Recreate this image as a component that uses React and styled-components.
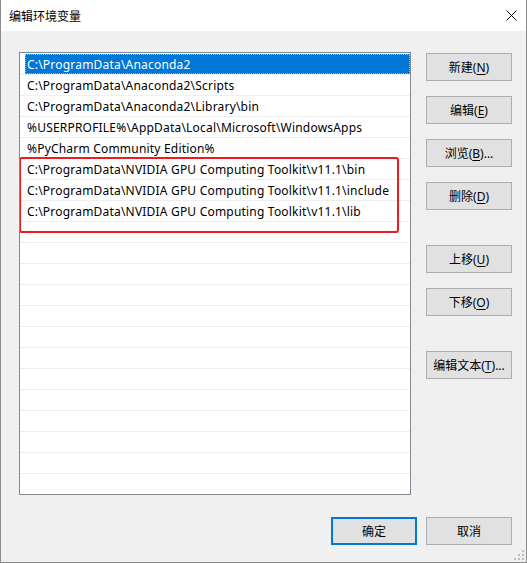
import styled, { createGlobalStyle } from "styled-components";

const GlobalStyle = createGlobalStyle`
  html, body {
    margin: 0;
    padding: 0;
    background: #f0f0f0;
  }
  * {
    box-sizing: border-box;
  }
`;

const FONT = `"Noto Sans", "Noto Sans CJK SC", sans-serif`;

const Window = styled.div`
  position: relative;
  display: flex;
  flex-direction: column;
  width: 527px;
  height: 563px;
  background: #f0f0f0;
  border: 1px solid #8c8c8c;
  border-top: none;
  font-family: ${FONT};
  font-size: 12px;
  color: #000;
`;

const TitleBar = styled.div`
  display: flex;
  align-items: center;
  justify-content: space-between;
  height: 31px;
  padding: 0 9px 0 8px;
  background: #fff;
`;

const Title = styled.span`
  font-family: "Noto Sans CJK SC", sans-serif;
  font-size: 12px;
  line-height: 1;
`;

const Body = styled.div`
  display: flex;
  gap: 15px;
  padding: 21px 14px 0 18px;
`;

const ListBox = styled.div`
  position: relative;
  width: 392px;
  height: 443px;
  padding-top: 1px;
  background: #fff;
  border: 1px solid #828790;
  overflow: hidden;
`;

const Row = styled.div`
  display: flex;
  height: 21px;
  border-bottom: 1px solid #efefef;
`;

const RowLabel = styled.div`
  display: flex;
  align-items: center;
  flex: 1;
  margin-left: ${p => (p.selected ? "5px" : "0")};
  padding-left: ${p => (p.selected ? "2px" : "7px")};
  white-space: nowrap;
  letter-spacing: 0.2px;
  background: ${p => (p.selected ? "#0078d7" : "transparent")};
  color: ${p => (p.selected ? "#fff" : "#000")};
  outline: ${p => (p.selected ? "1px dotted #ff9b3a" : "none")};
  outline-offset: -1px;
`;

const Highlight = styled.div`
  position: absolute;
  left: -1px;
  top: 104px;
  width: 380px;
  height: 76px;
  border: 2.5px solid #f21b1b;
  border-radius: 3px;
  pointer-events: none;
`;

const SideColumn = styled.div`
  display: flex;
  flex-direction: column;
  padding-top: 1px;
`;

const ButtonGroup = styled.div`
  display: flex;
  flex-direction: column;
  gap: 15px;
  margin-bottom: 35px;
`;

const Button = styled.button`
  display: flex;
  align-items: center;
  justify-content: center;
  width: 86px;
  height: 28px;
  padding: 0;
  background: #e1e1e1;
  border: ${p => (p.primary ? "2px solid #0078d7" : "1px solid #adadad")};
  font-family: ${FONT};
  font-size: 12px;
  color: #000;
`;

const Key = styled.span`
  text-decoration: underline;
  text-underline-offset: 2px;
`;

const Footer = styled.div`
  display: flex;
  justify-content: flex-end;
  gap: 9px;
  padding: 22px 14px 0 0;
`;

const Grip = styled.svg`
  position: absolute;
  right: 2px;
  bottom: 2px;
`;

const paths = [
  "C:\\ProgramData\\Anaconda2",
  "C:\\ProgramData\\Anaconda2\\Scripts",
  "C:\\ProgramData\\Anaconda2\\Library\\bin",
  "%USERPROFILE%\\AppData\\Local\\Microsoft\\WindowsApps",
  "%PyCharm Community Edition%",
  "C:\\ProgramData\\NVIDIA GPU Computing Toolkit\\v11.1\\bin",
  "C:\\ProgramData\\NVIDIA GPU Computing Toolkit\\v11.1\\include",
  "C:\\ProgramData\\NVIDIA GPU Computing Toolkit\\v11.1\\lib",
];

const rows = [...paths, ...Array(13).fill("")];

const Label = ({ text, k, tail = "" }) => (
  <span>
    {text}(<Key>{k}</Key>){tail}
  </span>
);

const App = () => {
  return (
    <>
      <GlobalStyle />
      <Window>
        <TitleBar>
          <Title>编辑环境变量</Title>
          <svg width="11" height="11" viewBox="0 0 11 11">
            <path d="M0.5 0.5 L10.5 10.5 M10.5 0.5 L0.5 10.5" stroke="#000" strokeWidth="1" />
          </svg>
        </TitleBar>
        <Body>
          <ListBox>
            {rows.map((p, i) => (
              <Row key={i}>
                <RowLabel selected={i === 0}>{p}</RowLabel>
              </Row>
            ))}
            <Highlight />
          </ListBox>
          <SideColumn>
            <ButtonGroup>
              <Button><Label text="新建" k="N" /></Button>
              <Button><Label text="编辑" k="E" /></Button>
              <Button><Label text="浏览" k="B" tail="..." /></Button>
              <Button><Label text="删除" k="D" /></Button>
            </ButtonGroup>
            <ButtonGroup>
              <Button><Label text="上移" k="U" /></Button>
              <Button><Label text="下移" k="O" /></Button>
            </ButtonGroup>
            <ButtonGroup>
              <Button><Label text="编辑文本" k="T" tail="..." /></Button>
            </ButtonGroup>
          </SideColumn>
        </Body>
        <Footer>
          <Button primary>确定</Button>
          <Button>取消</Button>
        </Footer>
        <Grip width="10" height="10" viewBox="0 0 10 10">
          <rect x="8" y="0" width="2" height="2" fill="#bdbdbd" />
          <rect x="4" y="4" width="2" height="2" fill="#bdbdbd" />
          <rect x="8" y="4" width="2" height="2" fill="#bdbdbd" />
          <rect x="0" y="8" width="2" height="2" fill="#bdbdbd" />
          <rect x="4" y="8" width="2" height="2" fill="#bdbdbd" />
          <rect x="8" y="8" width="2" height="2" fill="#bdbdbd" />
        </Grip>
      </Window>
    </>
  );
};

export default App;
